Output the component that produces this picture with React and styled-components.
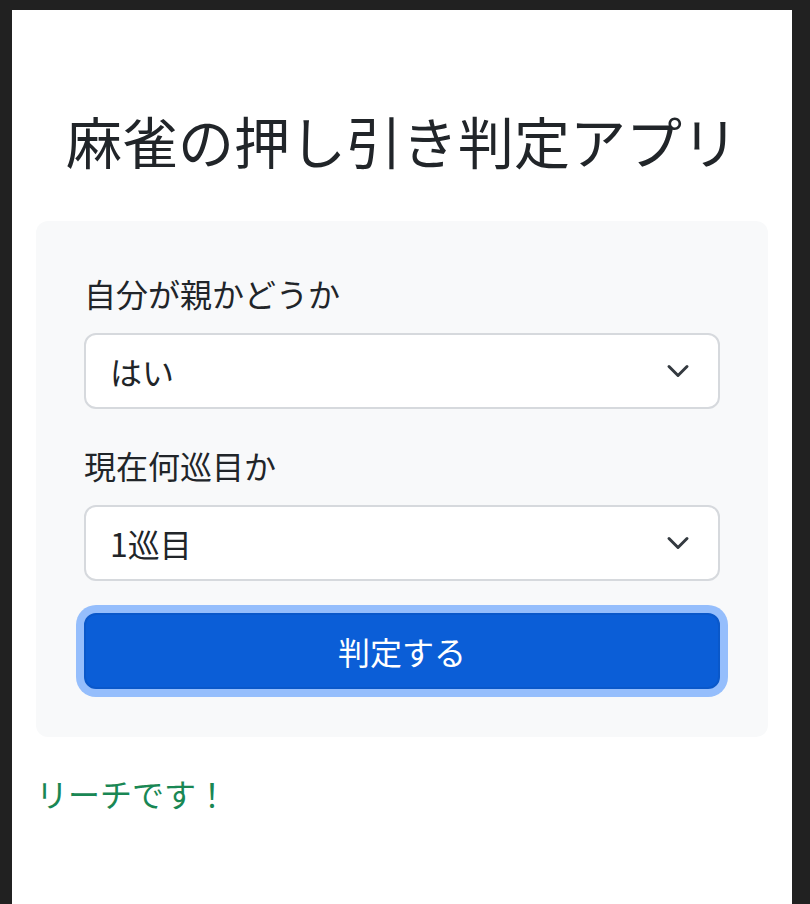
import React, { useState } from 'react';
import styled, { createGlobalStyle } from 'styled-components';

const GlobalStyle = createGlobalStyle`
    html, body {
        margin: 0;
        padding: 0;
        background: #212121;
    }
    body {
        font-family: "Noto Sans CJK JP", "Noto Sans", sans-serif;
        color: #212529;
    }
`;

const Frame = styled.div`
    padding: 10px 18px 0 12px;
    min-height: 904px;
    box-sizing: border-box;
`;

const Page = styled.main`
    background: #ffffff;
    min-height: 894px;
    padding: 96px 24px 40px;
    box-sizing: border-box;
`;

const Title = styled.h1`
    margin: 0 0 48px;
    font-size: 56px;
    font-weight: 400;
    line-height: 1.2;
    text-align: center;
    color: #212529;
`;

const Card = styled.form`
    background: #f8f9fa;
    border-radius: 12px;
    padding: 48px;
    display: flex;
    flex-direction: column;
`;

const Field = styled.div`
    display: flex;
    flex-direction: column;
    margin-bottom: 32px;
`;

const Label = styled.label`
    font-size: 32px;
    line-height: 48px;
    margin-bottom: 16px;
`;

const SelectWrap = styled.div`
    position: relative;
`;

const Select = styled.select`
    appearance: none;
    width: 100%;
    height: 76px;
    box-sizing: border-box;
    padding: 0 80px 0 24px;
    font-family: inherit;
    font-size: 32px;
    color: #212529;
    background: #ffffff;
    border: 2px solid #d6d9dd;
    border-radius: 12px;
    outline: none;
`;

const Chevron = styled.svg`
    position: absolute;
    right: 26px;
    top: 50%;
    width: 32px;
    height: 24px;
    margin-top: -12px;
    pointer-events: none;
`;

const Button = styled.button`
    height: 76px;
    border: 2px solid #0a58ca;
    border-radius: 12px;
    background: #0b5ed7;
    color: #ffffff;
    font-family: inherit;
    font-size: 32px;
    box-shadow: 0 0 0 8px rgba(49, 132, 253, 0.5);
    cursor: pointer;
`;

const Result = styled.p`
    margin: 32px 0 0;
    font-size: 32px;
    line-height: 48px;
    color: #198754;
`;

const ChevronIcon = () => (
    <Chevron viewBox="0 0 16 16">
        <path d="M2 5l6 6 6-6" fill="none" stroke="#343a40" strokeWidth="2" strokeLinecap="round" strokeLinejoin="round" />
    </Chevron>
);

const App = () => {
    const [parent, setParent] = useState('yes');
    const [turn, setTurn] = useState('1');

    return (
        <Frame>
            <GlobalStyle />
            <Page>
                <Title>麻雀の押し引き判定アプリ</Title>
                <Card onSubmit={(e) => e.preventDefault()}>
                    <Field>
                        <Label htmlFor="parent">自分が親かどうか</Label>
                        <SelectWrap>
                            <Select id="parent" value={parent} onChange={(e) => setParent(e.target.value)}>
                                <option value="yes">はい</option>
                                <option value="no">いいえ</option>
                            </Select>
                            <ChevronIcon />
                        </SelectWrap>
                    </Field>
                    <Field>
                        <Label htmlFor="turn">現在何巡目か</Label>
                        <SelectWrap>
                            <Select id="turn" value={turn} onChange={(e) => setTurn(e.target.value)}>
                                {Array.from({ length: 18 }, (_, i) => (
                                    <option key={i} value={String(i + 1)}>{i + 1}巡目</option>
                                ))}
                            </Select>
                            <ChevronIcon />
                        </SelectWrap>
                    </Field>
                    <Button type="submit">判定する</Button>
                </Card>
                <Result>リーチです！</Result>
            </Page>
        </Frame>
    );
};

export default App;
